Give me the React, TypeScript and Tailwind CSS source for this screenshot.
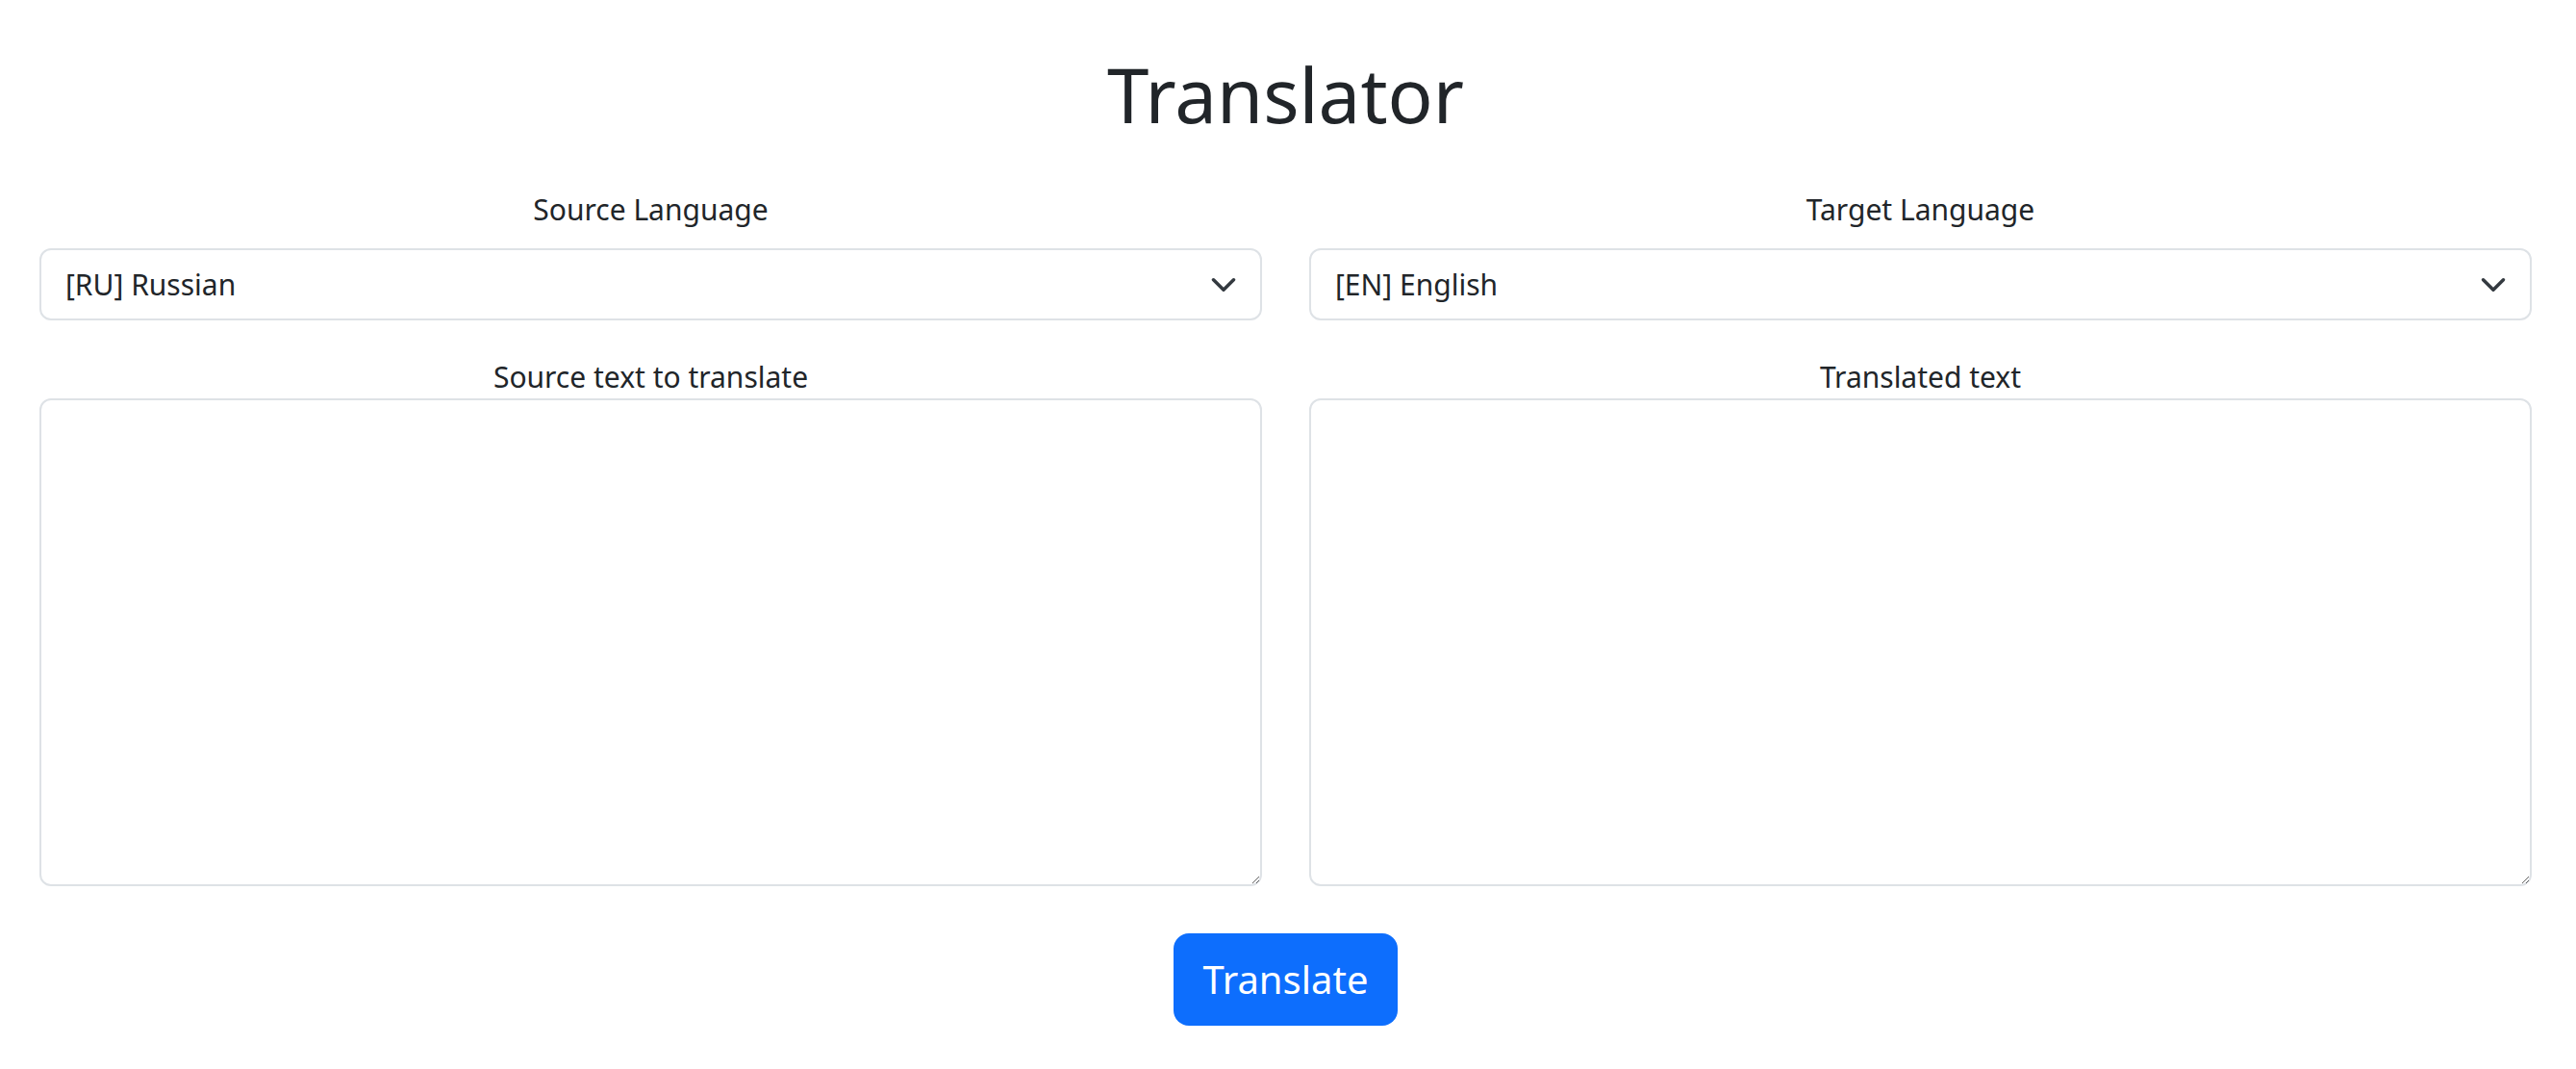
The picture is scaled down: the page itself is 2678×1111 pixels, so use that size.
import { useState } from "react";

const languages = [
  { code: "RU", name: "Russian" },
  { code: "EN", name: "English" },
  { code: "DE", name: "German" },
  { code: "FR", name: "French" },
];

function LanguageSelect({
  label,
  value,
  onChange,
}: {
  label: string;
  value: string;
  onChange: (v: string) => void;
}) {
  return (
    <div className="flex flex-col">
      <label className="text-center text-[30px] leading-[30px] h-[30px]">{label}</label>
      <div className="relative mt-[25px]">
        <select
          value={value}
          onChange={(e) => onChange(e.target.value)}
          className="w-full h-[75px] appearance-none rounded-[12px] border-2 border-[#dee2e6] bg-white pl-[25px] pr-[70px] text-[30px] text-[#212529] outline-none"
        >
          {languages.map((l) => (
            <option key={l.code} value={l.code}>
              [{l.code}] {l.name}
            </option>
          ))}
        </select>
        <svg
          className="pointer-events-none absolute right-[26px] top-1/2 -translate-y-1/2"
          width="28"
          height="28"
          viewBox="0 0 16 16"
          fill="none"
          stroke="#343a40"
          strokeWidth="2"
          strokeLinecap="round"
          strokeLinejoin="round"
        >
          <path d="m2 5 6 6 6-6" />
        </svg>
      </div>
    </div>
  );
}

export default function App() {
  const [source, setSource] = useState("RU");
  const [target, setTarget] = useState("EN");
  const [text, setText] = useState("");
  const [result, setResult] = useState("");

  return (
    <div
      className="min-h-screen bg-white text-[#212529] pl-[41px] pr-[46px]"
      style={{ fontFamily: '"Noto Sans", sans-serif' }}
    >
      <h1 className="pt-[59px] text-center text-[78px] leading-[78px] font-normal">Translator</h1>

      <div className="grid grid-cols-2 gap-x-[49px] mt-[66px]">
        <LanguageSelect label="Source Language" value={source} onChange={setSource} />
        <LanguageSelect label="Target Language" value={target} onChange={setTarget} />
      </div>

      <div className="grid grid-cols-2 gap-x-[49px] mt-[44px]">
        <div className="flex flex-col">
          <label className="text-center text-[30px] leading-[30px] h-[30px]">Source text to translate</label>
          <textarea
            value={text}
            onChange={(e) => setText(e.target.value)}
            className="mt-[7px] h-[507px] rounded-[12px] border-2 border-[#dee2e6] p-[24px] text-[30px] outline-none"
          ></textarea>
        </div>
        <div className="flex flex-col">
          <label className="text-center text-[30px] leading-[30px] h-[30px]">Translated text</label>
          <textarea
            value={result}
            readOnly
            className="mt-[7px] h-[507px] rounded-[12px] border-2 border-[#dee2e6] p-[24px] text-[30px] outline-none"
          ></textarea>
        </div>
      </div>

      <div className="flex justify-center mt-[49px]">
        <button
          type="button"
          onClick={() => setResult(text)}
          className="w-[233px] h-[96px] rounded-[16px] bg-[#0d6efd] text-white text-[40px]"
        >
          Translate
        </button>
      </div>
    </div>
  );
}
